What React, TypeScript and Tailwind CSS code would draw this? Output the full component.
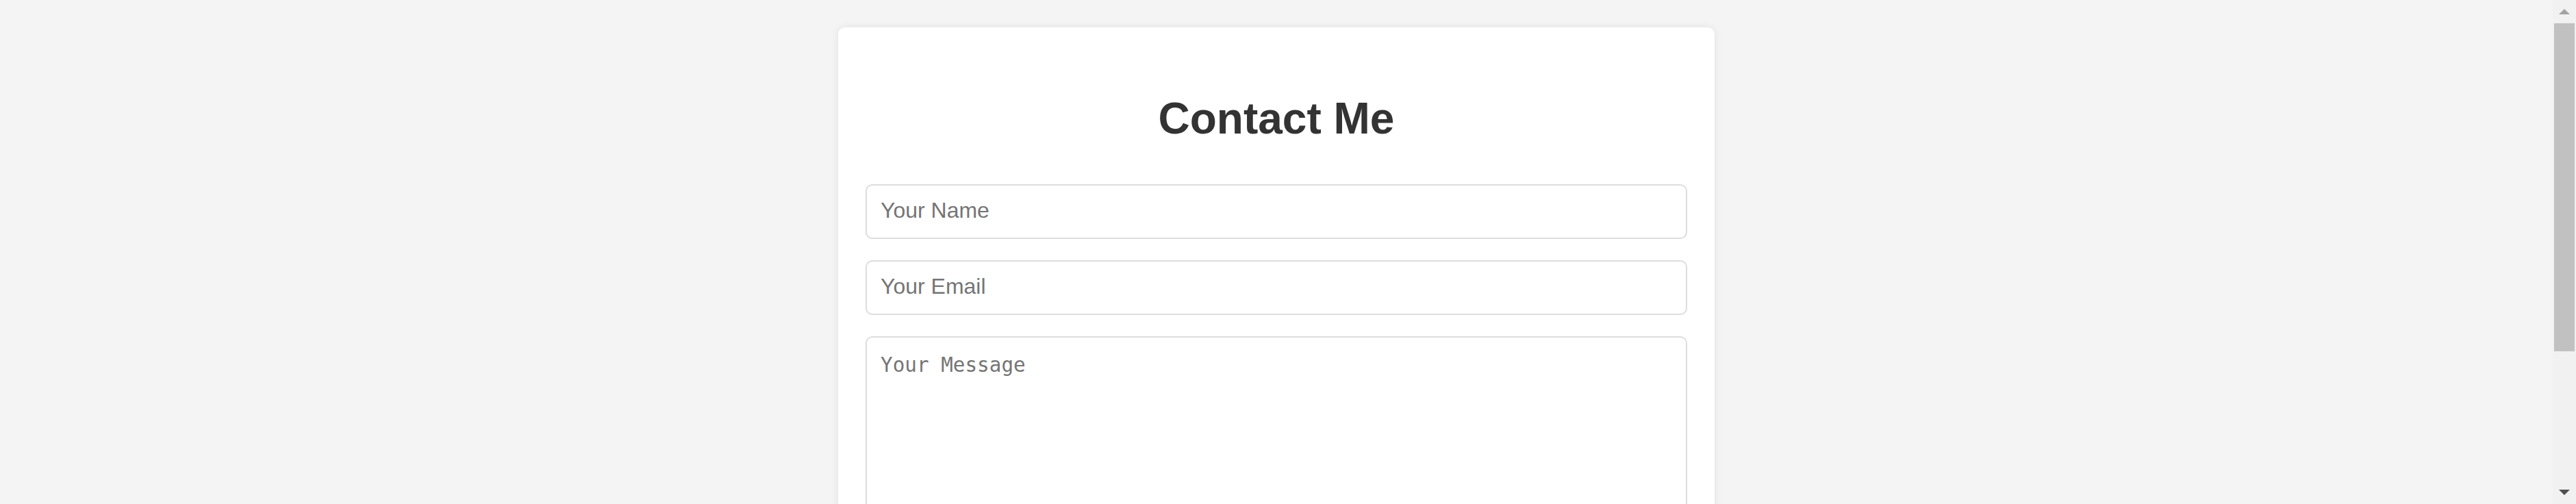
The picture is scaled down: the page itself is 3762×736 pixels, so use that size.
import React from "react";

export default function App() {
  return (
    <div className="flex h-screen w-full overflow-hidden bg-[#f4f4f4] font-['Liberation_Sans',Arial,sans-serif]">
      <main className="min-w-0 flex-1 overflow-hidden pt-[40px]">
        <div className="mx-auto w-[1280px] rounded-[10px] bg-white p-[40px] shadow-[0_0_12px_rgba(0,0,0,0.08)]">
          <h1 className="mt-[57px] text-center text-[64px] leading-[72px] font-bold text-[#333]">
            Contact Me
          </h1>
          <form className="mt-[60px] flex flex-col gap-[31px]">
            <input
              type="text"
              placeholder="Your Name"
              className="h-[80px] w-full rounded-[10px] border-2 border-solid border-[#ddd] bg-white px-[20px] pt-0 pb-[3px] text-[32px] text-[#333] outline-none placeholder:text-[#757575] font-['Liberation_Sans',Arial,sans-serif]"
            />
            <input
              type="email"
              placeholder="Your Email"
              className="h-[80px] w-full rounded-[10px] border-2 border-solid border-[#ddd] bg-white px-[20px] pt-0 pb-[3px] text-[32px] text-[#333] outline-none placeholder:text-[#757575] font-['Liberation_Sans',Arial,sans-serif]"
            />
            <textarea
              placeholder="Your Message"
              className="h-[341px] w-full resize-y rounded-[10px] border-2 border-solid border-[#ddd] bg-white px-[20px] pt-[19px] pb-[20px] text-[29.3px] text-[#333] outline-none placeholder:text-[#757575] font-['DejaVu_Sans_Mono',monospace]"
            />
          </form>
        </div>
      </main>
      <div className="flex h-full w-[34px] shrink-0 flex-col bg-[#f1f1f1]">
        <div className="flex h-[34px] shrink-0 items-center justify-center">
          <svg width="16" height="8" viewBox="0 0 16 8">
            <polygon points="0,8 8,0 16,8" fill="#a3a3a3" />
          </svg>
        </div>
        <div className="mx-[2px] h-[479px] shrink-0 bg-[#c1c1c1]" />
        <div className="flex-1" />
        <div className="flex h-[34px] shrink-0 items-center justify-center">
          <svg width="16" height="8" viewBox="0 0 16 8">
            <polygon points="0,0 16,0 8,8" fill="#505050" />
          </svg>
        </div>
      </div>
    </div>
  );
}
